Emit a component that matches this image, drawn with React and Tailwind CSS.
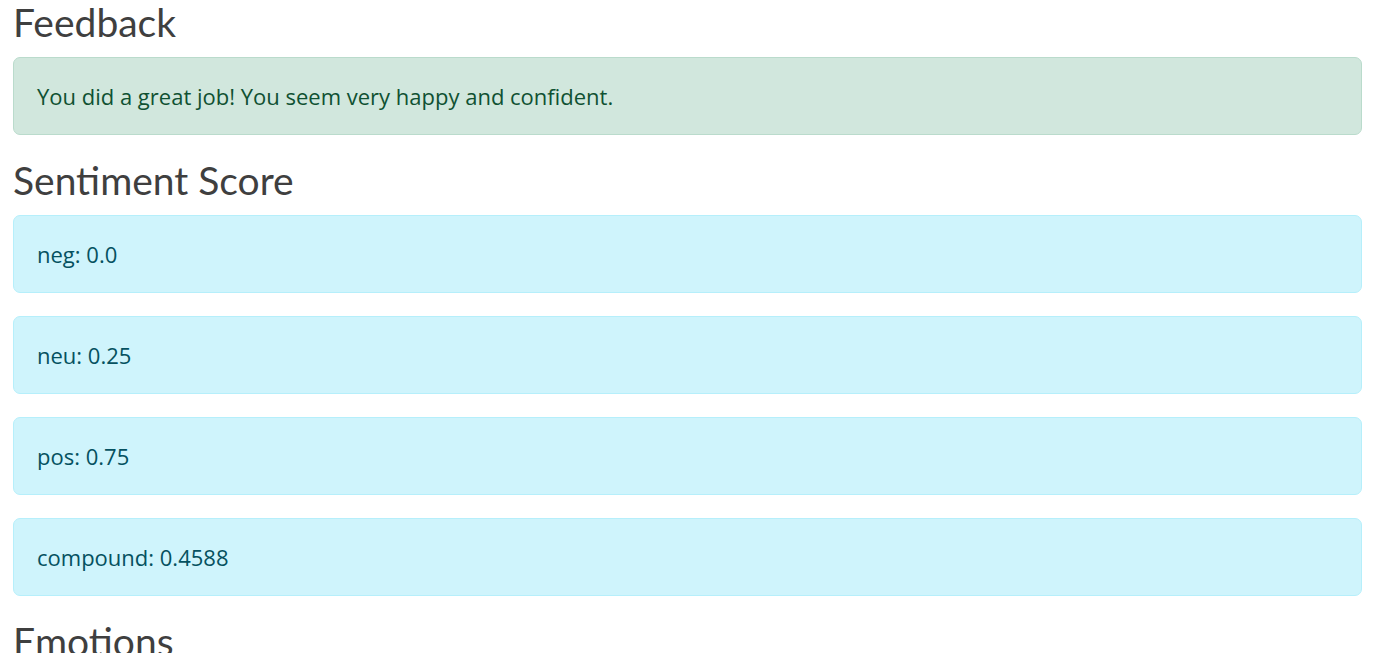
export default function App() {
  const scores = [
    ["neg", "0.0"],
    ["neu", "0.25"],
    ["pos", "0.75"],
    ["compound", "0.4588"],
  ];
  const heading = "text-[39px] leading-[44px] mb-[13px] text-[#3f3f3f] font-[Lato,'Noto_Sans',sans-serif]";
  const body = "font-['Open_Sans',sans-serif] text-[22px] leading-[34px]";
  return (
    <div className="bg-white min-h-screen pl-[13px] pr-[20px]">
      <h2 className={heading}>Feedback</h2>
      <div className={`${body} rounded-[7px] border border-[#badbcc] bg-[#d1e7dd] text-[#0f5132] px-[23px] py-[21px] mb-[23px]`}>
        You did a great job! You seem very happy and confident.
      </div>
      <h2 className={heading}>Sentiment Score</h2>
      {scores.map(([k, v]) => (
        <div
          key={k}
          className={`${body} rounded-[7px] border border-[#b6effb] bg-[#cff4fc] text-[#055160] px-[23px] py-[21px] mb-[23px]`}
        >
          {k}: {v}
        </div>
      ))}
      <h2 className={heading}>Emotions</h2>
    </div>
  );
}
